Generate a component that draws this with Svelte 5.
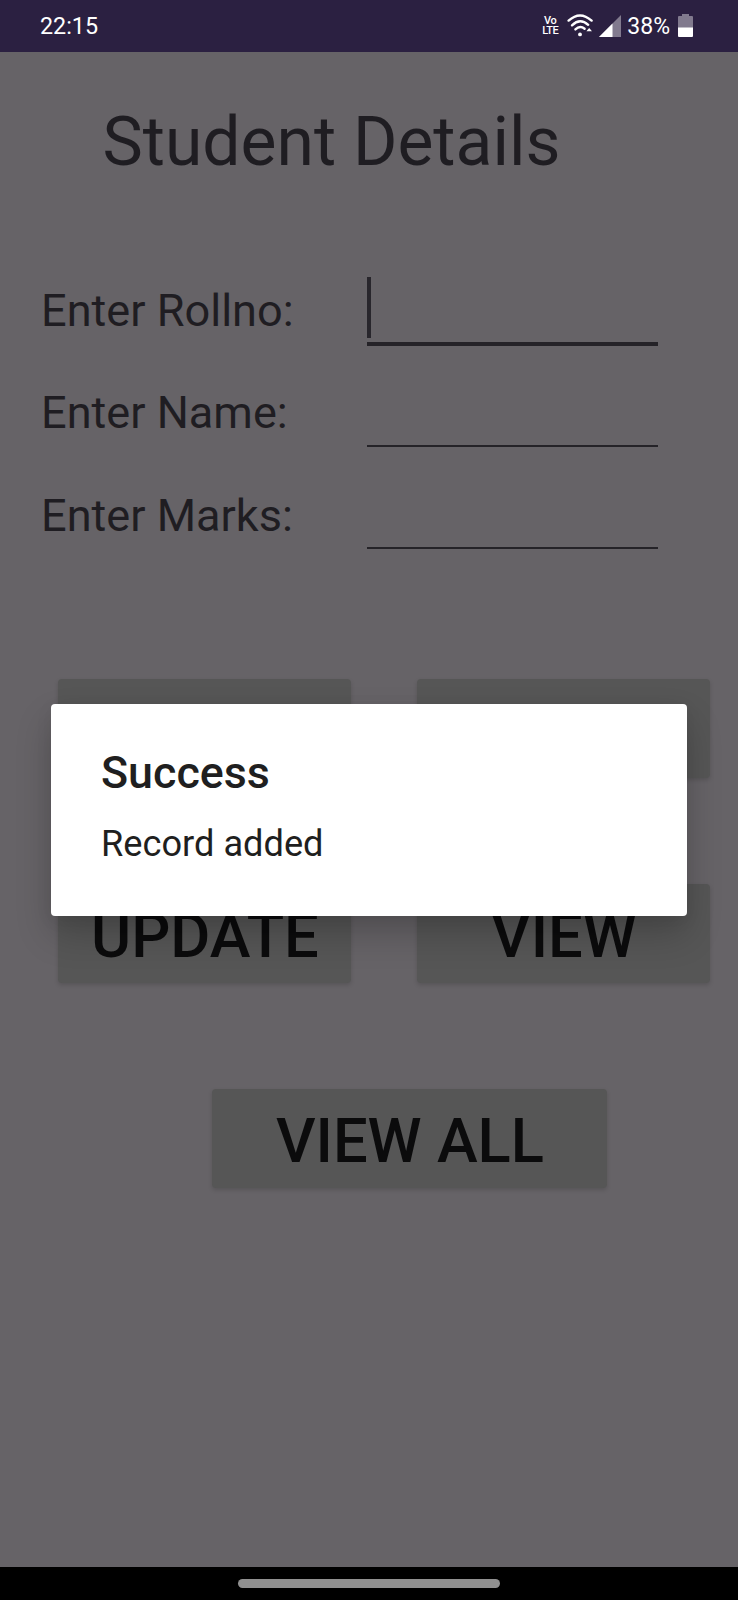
<script>
  const fields = [
    { label: 'Enter Rollno:', focused: true },
    { label: 'Enter Name:', focused: false },
    { label: 'Enter Marks:', focused: false }
  ];
  const actions = ['', '', 'Update', 'View'];
</script>

<div class="screen">
  <header class="status">
    <span class="time">22:15</span>
    <div class="indicators">
      <div class="volte"><span class="vo">Vo</span><span class="lte">LTE</span></div>
      <svg class="wifi" width="27" height="24" viewBox="0 0 27 24" fill="none" stroke="#fff" stroke-width="2.4" stroke-linecap="round">
        <path d="M1.6 6.6Q13 -3.8 24.6 6.6" />
        <path d="M5 11.3Q13 3.4 21.2 10.8" />
        <path d="M8.4 15.4Q13 11 17.6 14.8" />
        <circle cx="13" cy="20.4" r="1.9" fill="#fff" stroke="none" />
        <path d="M19.4 17.2L22.2 14L25 17.2Z" fill="#fff" stroke="none" />
      </svg>
      <svg class="signal" width="22" height="22" viewBox="0 0 22 22">
        <path d="M22 0V22H0Z" fill="#817a8e" />
        <path d="M13.5 8.5V22H0Z" fill="#fff" />
      </svg>
      <span class="percent">38%</span>
      <svg class="battery" width="15" height="23" viewBox="0 0 15 23">
        <path d="M4 0H11V2H14Q15 2 15 3V14H0V3Q0 2 1 2H4Z" fill="#817a8e" />
        <path d="M0 13.5H15V22Q15 23 14 23H1Q0 23 0 22Z" fill="#fff" />
      </svg>
    </div>
  </header>

  <main>
    <h1>Student Details</h1>
    <form>
      {#each fields as field}
        <div class="row">
          <span class="label">{field.label}</span>
          <div class="field" class:focused={field.focused}>
            {#if field.focused}<i class="caret"></i>{/if}
          </div>
        </div>
      {/each}
    </form>
    <div class="actions">
      {#each actions as action}
        <div class="button">{action}</div>
      {/each}
    </div>
    <div class="button all">View All</div>
    <div class="dialog" role="alertdialog">
      <h2>Success</h2>
      <p>Record added</p>
    </div>
  </main>

  <footer><div class="handle"></div></footer>
</div>

<style>
  :global(body) { margin: 0; background: #666367; }
  .screen {
    width: 738px;
    height: 1600px;
    display: flex;
    flex-direction: column;
    overflow: hidden;
    font-family: Roboto, sans-serif;
    color: #1f1d22;
    background: #666367;
  }
  .status {
    height: 52px;
    flex: none;
    box-sizing: border-box;
    padding: 0 45px 0 40px;
    display: flex;
    align-items: center;
    justify-content: space-between;
    background: #2b2041;
    color: #fff;
    font-size: 23.3px;
    line-height: 28px;
  }
  .percent { font-size: 23px; padding-top: 1px; }
  .indicators { display: flex; align-items: center; }
  .volte {
    display: flex;
    flex-direction: column;
    align-items: center;
    font-size: 11px;
    line-height: 10px;
    font-weight: 500;
    margin-right: 9px;
  }
  .vo { letter-spacing: -0.3px; }
  .lte { letter-spacing: -0.5px; }
  .wifi { margin-right: 5px; }
  .signal { margin-right: 6px; }
  .battery { margin-left: 8px; margin-top: -2px; }
  main { flex: 1; position: relative; }
  h1 {
    margin: 50px 0 0 102.5px;
    font-size: 67.8px;
    line-height: 80px;
    font-weight: 400;
  }
  form {
    display: flex;
    flex-direction: column;
    margin: 83px 0 0 41px;
  }
  .row { display: flex; height: 102.5px; }
  .label {
    width: 326px;
    padding-top: 18.9px;
    font-size: 45.1px;
    line-height: 53px;
  }
  .field {
    width: 291px;
    height: 79px;
    box-sizing: border-box;
    border-bottom: 2px solid #252328;
  }
  .focused { border-bottom-width: 4px; height: 81px; padding-top: 12px; }
  .caret { display: block; width: 4px; height: 61px; background: #28262c; }
  .actions {
    display: grid;
    grid-template-columns: 293px 293px;
    grid-auto-rows: 99px;
    gap: 106px 66px;
    margin: 106.5px 0 0 58.4px;
  }
  .button {
    box-sizing: border-box;
    height: 99px;
    border-radius: 4px;
    background: #565656;
    box-shadow: 0 2px 4px rgba(0, 0, 0, 0.15);
    color: #0b0b0c;
    font-size: 61.4px;
    line-height: 104px;
    font-weight: 500;
    text-align: center;
    text-transform: uppercase;
    white-space: nowrap;
  }
  .all { width: 395px; margin: 106px 0 0 212.4px; }
  .dialog {
    position: absolute;
    left: 51px;
    top: 651.5px;
    width: 636px;
    height: 212px;
    box-sizing: border-box;
    padding: 42.5px 50px;
    border-radius: 4px;
    background: #fff;
    color: #1f1f20;
    box-shadow: 0 18px 36px rgba(0, 0, 0, 0.2), 0 4px 18px rgba(0, 0, 0, 0.06);
  }
  h2 { margin: 0; font-size: 44.8px; line-height: 53px; font-weight: 500; }
  p { margin: 24px 0 0; font-size: 36.2px; line-height: 42px; }
  footer {
    height: 33px;
    flex: none;
    box-sizing: border-box;
    padding-top: 12px;
    background: #000;
  }
  .handle { width: 262px; height: 9px; margin: 0 auto; border-radius: 5px; background: #909090; }
</style>
